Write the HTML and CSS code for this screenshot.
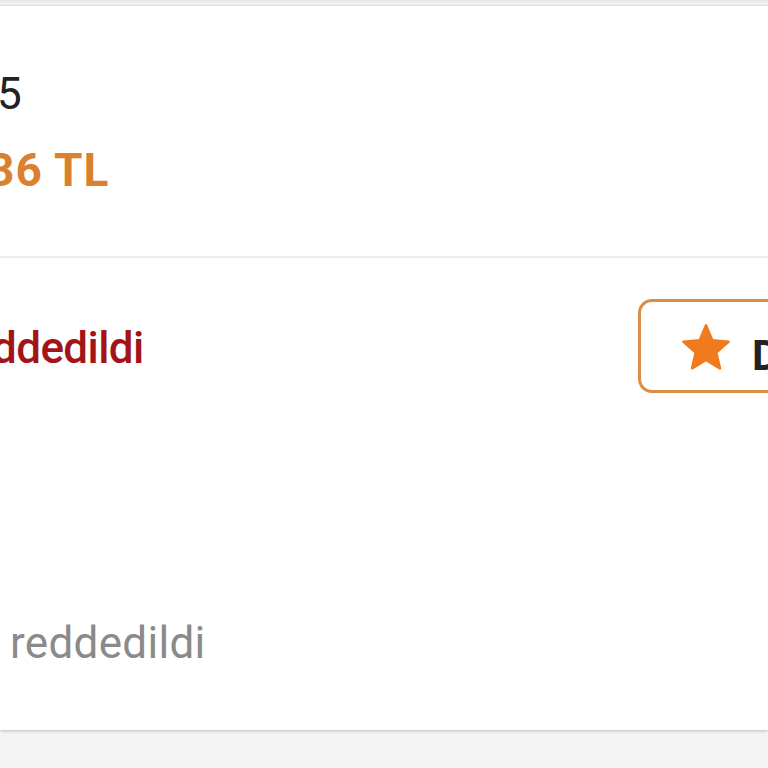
FILE: index.html
```html
<!DOCTYPE html>
<html lang="tr">
<head>
<meta charset="utf-8">
<title>Sipariş</title>
<link rel="stylesheet" href="styles.css">
</head>
<body>
<div class="page">
  <div class="card">
    <section class="summary">
      <div class="count">5</div>
      <div class="price">36 TL</div>
    </section>
    <div class="divider"></div>
    <section class="status">
      <div class="status-text">
        <div class="state">ddedildi</div>
        <div class="note">reddedildi</div>
      </div>
      <div class="rate-btn" role="button">
        <svg class="star" viewBox="0 0 24 24" aria-hidden="true">
          <path d="M12 17.27L18.18 21l-1.64-7.03L22 9.24l-7.19-.61L12 2 9.19 8.63 2 9.24l5.46 4.73L5.82 21z"/>
        </svg>
        <span class="rate-label">D</span>
      </div>
    </section>
  </div>
</div>
</body>
</html>
```

FILE: styles.css
```css
html, body {
  margin: 0;
  padding: 0;
  width: 768px;
  height: 768px;
  overflow: hidden;
  background: #f1f1f1;
  font-family: Roboto, "Noto Sans", "Liberation Sans", sans-serif;
}

.page {
  padding-top: 6px;
  height: 762px;
  background: linear-gradient(#e6e6e6, #f3f3f3 4px);
}

.card {
  height: 724px;
  background: #ffffff;
  box-shadow: 0 1px 3px rgba(0, 0, 0, 0.22), 0 -1px 2px rgba(0, 0, 0, 0.06);
  display: flex;
  flex-direction: column;
}

.summary {
  height: 250px;
  padding-top: 62px;
  box-sizing: border-box;
  display: flex;
  flex-direction: column;
  gap: 23px;
}

.count {
  font-size: 44px;
  line-height: 52px;
  color: #222222;
  margin-left: -3px;
  letter-spacing: 1px;
}

.price {
  font-size: 46px;
  line-height: 54px;
  font-weight: 700;
  color: #d9812f;
  margin-left: -12px;
  letter-spacing: 1px;
  white-space: nowrap;
}

.divider {
  height: 2px;
  background: #ececec;
}

.status {
  display: flex;
  align-items: flex-start;
  padding-top: 41px;
}

.status-text {
  flex: 1;
  display: flex;
  flex-direction: column;
  padding-top: 23px;
}

.state {
  font-size: 44px;
  line-height: 52px;
  font-weight: 500;
  color: #a3141a;
  margin-left: -8px;
  letter-spacing: -0.6px;
}

.note {
  font-size: 44px;
  line-height: 52px;
  color: #8a8a8a;
  margin-top: 243px;
  margin-left: 10px;
  letter-spacing: 0.3px;
}

.rate-btn {
  flex: none;
  width: 130px;
  height: 94px;
  box-sizing: border-box;
  border: 3px solid #d98d45;
  border-right: none;
  border-radius: 14px 0 0 14px;
  background: #ffffff;
  display: flex;
  align-items: center;
  padding-left: 38px;
  gap: 19px;
  overflow: hidden;
}

.star {
  width: 54px;
  height: 54px;
  margin-top: 4px;
  fill: #f07b1f;
  stroke: #f07b1f;
  stroke-width: 1.2;
  stroke-linejoin: round;
  flex: none;
}

.rate-label {
  font-size: 42px;
  line-height: 50px;
  font-weight: 700;
  color: #222222;
  white-space: nowrap;
  margin-top: 20px;
}
```
